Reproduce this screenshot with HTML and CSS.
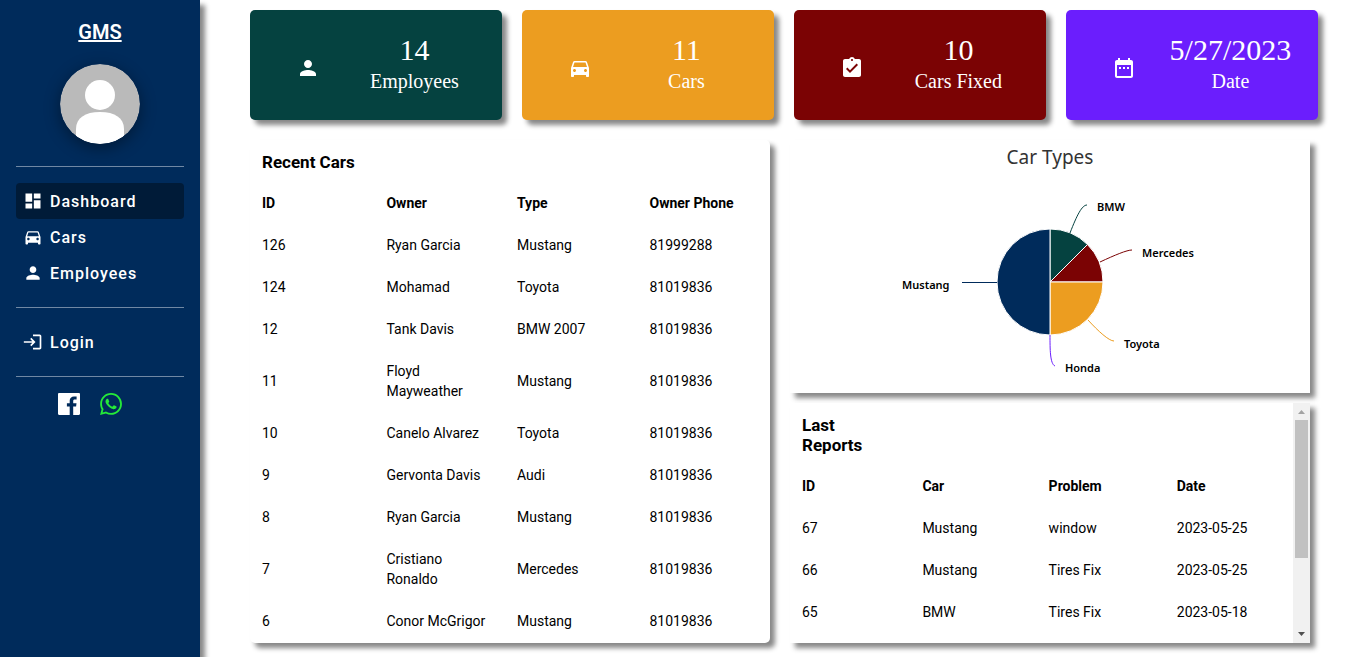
FILE: index.html
```html
<!DOCTYPE html>
<html lang="en">
<head>
<meta charset="utf-8">
<meta name="viewport" content="width=device-width, initial-scale=1">
<title>GMS Dashboard</title>
<link rel="stylesheet" href="styles.css">
</head>
<body>
<div class="app">
  <aside class="sidebar">
    <a class="brand" href="#">GMS</a>
    <svg class="avatar" viewBox="0 0 80 80" role="img" aria-label="Profile">
      <defs><clipPath id="avatar-clip"><circle cx="40" cy="40" r="40"/></clipPath></defs>
      <g clip-path="url(#avatar-clip)">
        <rect width="80" height="80" fill="#bababa"/>
        <circle cx="40" cy="31" r="15" fill="#fff"/>
        <path d="M16 80V65C16 54 25 48 40 48s24 6 24 17v15z" fill="#fff"/>
      </g>
    </svg>
    <nav class="menu">
      <a class="menu-item active" href="#"><svg class="menu-icon" viewBox="0 0 24 24"><path d="M3 13h8V3H3v10zm0 8h8v-6H3v6zm10 0h8V11h-8v10zm0-18v6h8V3h-8z"/></svg>Dashboard</a>
      <a class="menu-item" href="#"><svg class="menu-icon" viewBox="0 0 24 24"><path d="M18.92 6.01C18.72 5.42 18.16 5 17.5 5h-11c-.66 0-1.21.42-1.42 1.01L3 12v8c0 .55.45 1 1 1h1c.55 0 1-.45 1-1v-1h12v1c0 .55.45 1 1 1h1c.55 0 1-.45 1-1v-8l-2.08-5.99zM6.5 16c-.83 0-1.5-.67-1.5-1.5S5.67 13 6.5 13s1.500.67 1.500 1.500S7.330 16 6.500 16zm11 0c-.83 0-1.500-.67-1.500-1.500s.67-1.500 1.500-1.500 1.500.67 1.500 1.500-.67 1.500-1.500 1.500zM5 11l1.500-4.500h11L19 11H5z"/></svg>Cars</a>
      <a class="menu-item" href="#"><svg class="menu-icon" viewBox="0 0 24 24"><path d="M12 12c2.210 0 4-1.790 4-4s-1.790-4-4-4-4 1.790-4 4 1.790 4 4 4zm0 2c-2.670 0-8 1.340-8 4v2h16v-2c0-2.660-5.330-4-8-4z"/></svg>Employees</a>
    </nav>
    <nav class="menu">
      <a class="menu-item" href="#"><svg class="menu-icon" viewBox="0 0 24 24"><path d="M10 7l-1.400 1.400 2.600 2.600H1v2h10.200l-2.600 2.600L10 17l5-5-5-5zm10 12h-8v2h8c1.100 0 2-.9 2-2V5c0-1.100-.9-2-2-2h-8v2h8v14z"/></svg>Login</a>
    </nav>
    <div class="social">
      <a href="#" aria-label="Facebook"><svg class="social-icon" viewBox="0 0 22 22"><path fill="#fff" d="M1.200 0h19.600C21.500 0 22 .5 22 1.200v19.600c0 .7-.5 1.200-1.200 1.200h-5.600v-8.500h2.900l.4-3.300h-3.300V8c0-1 .3-1.600 1.600-1.600h1.800V3.500c-.3 0-1.400-.1-2.600-.1-2.500 0-4.300 1.600-4.300 4.400v2.400H8.900v3.300h2.800V22H1.200C.5 22 0 21.500 0 20.800V1.200C0 .5.5 0 1.200 0z"/></svg></a>
      <a href="#" aria-label="WhatsApp"><svg class="social-icon" viewBox="2 2 20 20"><path fill="#25ea38" d="M19.050 4.910A9.816 9.816 0 0 0 12.040 2c-5.460 0-9.910 4.450-9.910 9.910 0 1.750.46 3.450 1.320 4.950L2.050 22l5.250-1.380c1.450.79 3.080 1.210 4.740 1.210 5.460 0 9.910-4.450 9.910-9.910 0-2.650-1.030-5.140-2.900-7.010zm-7.010 15.240c-1.480 0-2.930-.4-4.200-1.150l-.3-.18-3.120.82.83-3.040-.2-.31a8.264 8.264 0 0 1-1.260-4.380c0-4.540 3.700-8.240 8.240-8.240 2.200 0 4.270.86 5.820 2.420a8.183 8.183 0 0 1 2.410 5.830c.02 4.540-3.680 8.230-8.220 8.230zm4.520-6.160c-.25-.12-1.470-.72-1.690-.81-.23-.08-.39-.12-.56.12-.17.25-.64.81-.78.97-.14.17-.29.19-.54.06-.25-.12-1.050-.39-1.990-1.230-.74-.66-1.230-1.470-1.380-1.720-.14-.25-.02-.38.11-.51.11-.11.25-.29.37-.43s.17-.25.25-.41c.08-.17.04-.31-.02-.43s-.56-1.340-.76-1.840c-.2-.48-.41-.42-.56-.43h-.48c-.17 0-.43.06-.66.31-.22.25-.86.85-.86 2.070 0 1.220.89 2.400 1.010 2.560.12.17 1.750 2.670 4.230 3.740.59.26 1.050.41 1.410.52.59.19 1.130.16 1.560.1.48-.07 1.470-.6 1.670-1.180.21-.58.21-1.070.14-1.180s-.22-.16-.47-.28z"/></svg></a>
    </div>
  </aside>

  <main class="main">
    <section class="stats">
      <div class="stat teal">
        <svg class="stat-icon" viewBox="0 0 24 24"><path d="M12 12c2.210 0 4-1.790 4-4s-1.790-4-4-4-4 1.790-4 4 1.790 4 4 4zm0 2c-2.670 0-8 1.340-8 4v2h16v-2c0-2.660-5.330-4-8-4z"/></svg>
        <div class="stat-text"><span class="stat-value">14</span><span class="stat-label">Employees</span></div>
      </div>
      <div class="stat orange">
        <svg class="stat-icon" viewBox="0 0 24 24"><path d="M18.920 6.010C18.720 5.420 18.160 5 17.500 5h-11c-.66 0-1.210.42-1.420 1.010L3 12v8c0 .55.45 1 1 1h1c.55 0 1-.45 1-1v-1h12v1c0 .55.45 1 1 1h1c.55 0 1-.45 1-1v-8l-2.080-5.990zM6.500 16c-.83 0-1.500-.67-1.500-1.500S5.670 13 6.500 13s1.500.67 1.500 1.500S7.330 16 6.500 16zm11 0c-.83 0-1.500-.67-1.500-1.500s.67-1.500 1.500-1.500 1.500.67 1.500 1.500-.67 1.500-1.500 1.500zM5 11l1.500-4.500h11L19 11H5z"/></svg>
        <div class="stat-text"><span class="stat-value">11</span><span class="stat-label">Cars</span></div>
      </div>
      <div class="stat red">
        <svg class="stat-icon" viewBox="0 0 24 24"><path d="M19 3h-4.180C14.400 1.840 13.300 1 12 1s-2.400.84-2.820 2H5c-1.100 0-2 .9-2 2v14c0 1.100.9 2 2 2h14c1.100 0 2-.9 2-2V5c0-1.100-.9-2-2-2zm-7 0c.55 0 1 .45 1 1s-.45 1-1 1-1-.45-1-1 .45-1 1-1zm-2 14l-4-4 1.410-1.410L10 14.170l6.590-6.590L18 9l-8 8z"/></svg>
        <div class="stat-text"><span class="stat-value">10</span><span class="stat-label">Cars Fixed</span></div>
      </div>
      <div class="stat purple">
        <svg class="stat-icon" viewBox="0 0 24 24"><path d="M9 11H7v2h2v-2zm4 0h-2v2h2v-2zm4 0h-2v2h2v-2zm2-7h-1V2h-2v2H8V2H6v2H5c-1.100 0-2 .9-2 2v14c0 1.100.9 2 2 2h14c1.100 0 2-.9 2-2V6c0-1.100-.9-2-2-2zm0 16H5V9h14v11z"/></svg>
        <div class="stat-text"><span class="stat-value">5/27/2023</span><span class="stat-label">Date</span></div>
      </div>
    </section>

    <div class="panels">
      <section class="panel recent">
        <table class="data">
          <colgroup><col class="col-id"><col class="col-a"><col class="col-b"><col class="col-c"></colgroup>
          <thead>
            <tr><th class="title" colspan="2">Recent Cars</th><td colspan="2"></td></tr>
            <tr><th>ID</th><th>Owner</th><th>Type</th><th>Owner Phone</th></tr>
          </thead>
          <tbody>
            <tr><td>126</td><td>Ryan Garcia</td><td>Mustang</td><td>81999288</td></tr>
            <tr><td>124</td><td>Mohamad</td><td>Toyota</td><td>81019836</td></tr>
            <tr><td>12</td><td>Tank Davis</td><td>BMW 2007</td><td>81019836</td></tr>
            <tr><td>11</td><td>Floyd Mayweather</td><td>Mustang</td><td>81019836</td></tr>
            <tr><td>10</td><td>Canelo Alvarez</td><td>Toyota</td><td>81019836</td></tr>
            <tr><td>9</td><td>Gervonta Davis</td><td>Audi</td><td>81019836</td></tr>
            <tr><td>8</td><td>Ryan Garcia</td><td>Mustang</td><td>81019836</td></tr>
            <tr><td>7</td><td>Cristiano Ronaldo</td><td>Mercedes</td><td>81019836</td></tr>
            <tr><td>6</td><td>Conor McGrigor</td><td>Mustang</td><td>81019836</td></tr>
          </tbody>
        </table>
      </section>

      <div class="side">
        <section class="panel chart">
          <h2 class="chart-title">Car Types</h2>
          <svg class="pie" viewBox="0 0 320 200" role="img" aria-label="Car types pie chart">
            <g stroke="#fff" stroke-linejoin="round">
              <path fill="#054240" d="M160 100V47A53 53 0 0 1 197.500 62.500z"/>
              <path fill="#7b0304" d="M160 100L197.500 62.500A53 53 0 0 1 213 100z"/>
              <path fill="#ec9d20" d="M160 100H213A53 53 0 0 1 160 153z"/>
              <path fill="#002b5b" d="M160 100V153A53 53 0 0 1 160 47z"/>
            </g>
            <g fill="none">
              <path stroke="#054240" d="M197 23C192 23 187 33 180 51"/>
              <path stroke="#7b0304" d="M242 68C237 68 225 73 210 80"/>
              <path stroke="#ec9d20" d="M224 159C219 159 208 149 198 138"/>
              <path stroke="#6b1efd" d="M165 184C160 182 160 167 160 153"/>
              <path stroke="#002b5b" d="M72 100.500H107"/>
            </g>
            <g class="pie-labels">
              <text x="207" y="29">BMW</text>
              <text x="252" y="75">Mercedes</text>
              <text x="234" y="166">Toyota</text>
              <text x="175" y="190">Honda</text>
              <text x="12" y="107">Mustang</text>
            </g>
          </svg>
        </section>

        <section class="panel reports">
          <div class="reports-scroll">
            <table class="data">
              <colgroup><col class="col-id"><col class="col-a"><col class="col-b"><col class="col-c"></colgroup>
              <thead>
                <tr><th class="title">Last Reports</th><td colspan="3"></td></tr>
                <tr><th>ID</th><th>Car</th><th>Problem</th><th>Date</th></tr>
              </thead>
              <tbody>
                <tr><td>67</td><td>Mustang</td><td>window</td><td>2023-05-25</td></tr>
                <tr><td>66</td><td>Mustang</td><td>Tires Fix</td><td>2023-05-25</td></tr>
                <tr><td>65</td><td>BMW</td><td>Tires Fix</td><td>2023-05-18</td></tr>
              </tbody>
            </table>
          </div>
          <div class="scrollbar" aria-hidden="true">
            <svg class="arrow" viewBox="0 0 17 17"><path fill="#a3a3a3" d="M5 11h7L8.500 7z"/></svg>
            <div class="track"><div class="thumb"></div></div>
            <svg class="arrow" viewBox="0 0 17 17"><path fill="#505050" d="M5 6h7l-3.500 4z"/></svg>
          </div>
        </section>
      </div>
    </div>
  </main>
</div>
</body>
</html>
```
FILE: styles.css
```css
* {
  box-sizing: border-box;
}

body {
  margin: 0;
  background: #fff;
  color: #000;
  font-family: Roboto, "Liberation Sans", sans-serif;
}

a {
  color: inherit;
  text-decoration: none;
}

.app {
  display: flex;
  min-height: 100vh;
}

.sidebar {
  flex: 0 0 200px;
  display: flex;
  flex-direction: column;
  padding: 20px 16px;
  background: #002b5b;
  color: #fff;
  box-shadow: 5px 5px 5px #888;
}

.brand {
  align-self: center;
  font-size: 20px;
  font-weight: 600;
  line-height: 24px;
  text-decoration: underline;
}

.avatar {
  align-self: center;
  width: 80px;
  height: 80px;
  margin: 20px 0 22px;
  border-radius: 50%;
  box-shadow: 0 4px 16px rgba(0, 0, 0, 0.4);
}

.menu {
  display: flex;
  flex-direction: column;
  padding: 16px 0;
  border-top: 1px solid #7088a4;
}

.menu-item {
  display: flex;
  align-items: center;
  gap: 7px;
  height: 36px;
  padding: 0 7px;
  border-radius: 4px;
  font-size: 16px;
  font-weight: 500;
  letter-spacing: 1px;
}

.menu-item.active {
  background: #001b38;
}

.menu-icon {
  width: 20px;
  height: 20px;
  fill: #fff;
}

.social {
  display: flex;
  gap: 20px;
  padding: 16px 42px;
  border-top: 1px solid #7088a4;
}

.social-icon {
  display: block;
  width: 22px;
  height: 22px;
}

.main {
  flex: 1;
  min-width: 0;
  padding: 10px 48px 13px 50px;
}

.stats {
  display: grid;
  grid-template-columns: repeat(4, 1fr);
  gap: 20px;
}

.stat {
  display: grid;
  grid-template-columns: 2fr 3fr;
  align-items: center;
  justify-items: center;
  padding: 24px 24px 24px 16px;
  border-radius: 5px;
  color: #fff;
  box-shadow: 5px 5px 5px #888;
}

.stat-icon {
  width: 24px;
  height: 30px;
  padding-top: 6px;
  fill: #fff;
}

.stat-text {
  display: flex;
  flex-direction: column;
  align-items: center;
  font-family: "Liberation Serif", serif;
  white-space: nowrap;
}

.stat-value {
  font-size: 30px;
  line-height: 32px;
}

.stat-label {
  font-size: 20px;
  line-height: 30px;
}

.teal { background: #054240; }
.orange { background: #ec9d20; }
.red { background: #7b0304; }
.purple { background: #6b1efd; }

.panels {
  display: grid;
  grid-template-columns: repeat(2, minmax(0, 1fr));
  gap: 20px;
  padding: 20px 8px 0 0;
}

.panel {
  background: #fff;
  box-shadow: 5px 5px 5px #888;
}

.recent {
  border-radius: 5px;
}

.side {
  display: flex;
  flex-direction: column;
  gap: 10px;
}

.data {
  width: 100%;
  table-layout: fixed;
  border-collapse: collapse;
  font-size: 14px;
  line-height: 20px;
}

.data th,
.data td {
  padding: 11px 16px 11px 12px;
  text-align: left;
}

.data .title {
  padding: 12px 16px 10px 12px;
  font-size: 17px;
}

/* Proportional widths, scaled up to fill the table */
.col-id { width: 62px; }
.col-a { width: 65px; }
.col-b { width: 66px; }
.col-c { width: 66px; }

.chart {
  display: flex;
  flex-direction: column;
  align-items: center;
  padding: 4px 0 11px;
}

.chart-title {
  margin: 0 0 12px;
  color: #333;
  font-family: "Noto Sans", sans-serif;
  font-size: 19px;
  font-weight: 400;
  line-height: 26px;
}

.pie {
  width: 320px;
  height: 200px;
}

.pie-labels {
  font-family: "Noto Sans", sans-serif;
  font-size: 11px;
  font-weight: 600;
}

.reports {
  display: flex;
  min-height: 240px;
}

.reports-scroll {
  flex: 1;
  min-width: 0;
}

.scrollbar {
  display: flex;
  flex: 0 0 17px;
  flex-direction: column;
  background: #f1f1f1;
}

.arrow {
  width: 17px;
  height: 17px;
}

.track {
  flex: 1;
  padding: 0 2px;
}

.thumb {
  height: 67%;
  background: #c1c1c1;
}
```
